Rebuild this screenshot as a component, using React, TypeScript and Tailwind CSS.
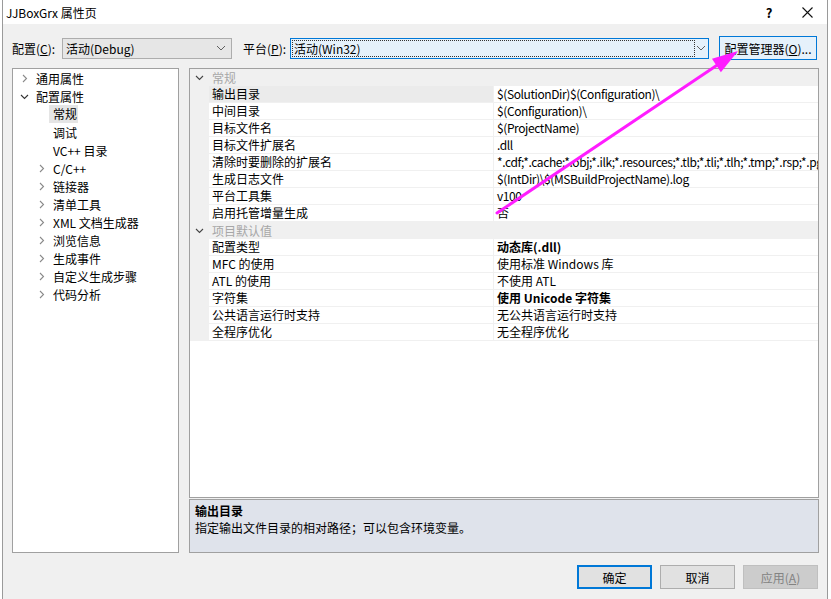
import React from "react";

const ChevR = ({ color = "#8a8a8a" }: { color?: string }) => (
  <svg width="9" height="9" viewBox="0 0 9 9" className="block">
    <path d="M3 1 L6.5 4.5 L3 8" fill="none" stroke={color} strokeWidth="1.1" />
  </svg>
);
const ChevD = ({ color = "#333333" }: { color?: string }) => (
  <svg width="9" height="9" viewBox="0 0 9 9" className="block">
    <path d="M1 3 L4.5 6.5 L8 3" fill="none" stroke={color} strokeWidth="1.1" />
  </svg>
);
const ComboChev = () => (
  <svg width="10" height="6" viewBox="0 0 10 6" className="block">
    <path d="M1 1 L5 5 L9 1" fill="none" stroke="#606060" strokeWidth="1" />
  </svg>
);

type TreeItem = { label: string; level: 1 | 2; chev?: "r" | "d"; selected?: boolean };
const tree: TreeItem[] = [
  { label: "通用属性", level: 1, chev: "r" },
  { label: "配置属性", level: 1, chev: "d" },
  { label: "常规", level: 2, selected: true },
  { label: "调试", level: 2 },
  { label: "VC++ 目录", level: 2 },
  { label: "C/C++", level: 2, chev: "r" },
  { label: "链接器", level: 2, chev: "r" },
  { label: "清单工具", level: 2, chev: "r" },
  { label: "XML 文档生成器", level: 2, chev: "r" },
  { label: "浏览信息", level: 2, chev: "r" },
  { label: "生成事件", level: 2, chev: "r" },
  { label: "自定义生成步骤", level: 2, chev: "r" },
  { label: "代码分析", level: 2, chev: "r" },
];

type Row =
  | { kind: "h"; label: string }
  | { kind: "r"; name: string; value: string; bold?: boolean; sel?: boolean };

const rows: Row[] = [
  { kind: "h", label: "常规" },
  { kind: "r", name: "输出目录", value: "$(SolutionDir)$(Configuration)\\", sel: true },
  { kind: "r", name: "中间目录", value: "$(Configuration)\\" },
  { kind: "r", name: "目标文件名", value: "$(ProjectName)" },
  { kind: "r", name: "目标文件扩展名", value: ".dll" },
  {
    kind: "r",
    name: "清除时要删除的扩展名",
    value: "*.cdf;*.cache;*.obj;*.ilk;*.resources;*.tlb;*.tli;*.tlh;*.tmp;*.rsp;*.pgc;*.pgd;*.meta;$(TargetPath)",
  },
  { kind: "r", name: "生成日志文件", value: "$(IntDir)\\$(MSBuildProjectName).log" },
  { kind: "r", name: "平台工具集", value: "v100" },
  { kind: "r", name: "启用托管增量生成", value: "否" },
  { kind: "h", label: "项目默认值" },
  { kind: "r", name: "配置类型", value: "动态库(.dll)", bold: true },
  { kind: "r", name: "MFC 的使用", value: "使用标准 Windows 库" },
  { kind: "r", name: "ATL 的使用", value: "不使用 ATL" },
  { kind: "r", name: "字符集", value: "使用 Unicode 字符集", bold: true },
  { kind: "r", name: "公共语言运行时支持", value: "无公共语言运行时支持" },
  { kind: "r", name: "全程序优化", value: "无全程序优化" },
];

const isAscii = (s: string) => /^[\x20-\x7e]+$/.test(s);

export default function App() {
  // arrow geometry
  const sx = 497, sy = 213, tx = 738, ty = 51;
  const dx = tx - sx, dy = ty - sy;
  const len = Math.hypot(dx, dy);
  const ux = dx / len, uy = dy / len;
  const hl = 26, hw = 8;
  const bx = tx - ux * hl, by = ty - uy * hl;
  const px = -uy, py = ux;
  const head = `${tx},${ty} ${bx + px * hw},${by + py * hw} ${bx - px * hw},${by - py * hw}`;

  return (
    <div className="relative w-[831px] h-[599px] overflow-hidden bg-white text-[12px] leading-[17px] text-black font-['Noto_Sans_CJK_SC','Noto_Sans',sans-serif]">
      <div className="ml-[2px] w-[826px] h-[599px] flex flex-col bg-[#f0f0f0] border-l border-r border-[#9a9a9a]">
        {/* title bar */}
        <div className="h-[24px] shrink-0 bg-white flex items-center pl-[3px]">
          <span className="flex-1">JJBoxGrx 属性页</span>
          <span className="w-[14px] text-center text-[13px] font-bold mr-[26px]">?</span>
          <svg width="11" height="11" viewBox="0 0 11 11" className="block mr-[14px]">
            <path d="M0.5 0.5 L10.5 10.5 M10.5 0.5 L0.5 10.5" stroke="#111" strokeWidth="1.1" />
          </svg>
        </div>

        <div className="flex-1 min-w-0 flex flex-col pl-[9px] pr-[8px]">
          {/* config row */}
          <div className="mt-[12px] h-[24px] flex items-center">
            <span className="w-[50px] shrink-0">
              配置(<span className="underline">C</span>):
            </span>
            <div className="w-[170px] shrink-0 h-[21px] bg-[#e6e6e6] border border-[#adadad] flex items-center pl-[3px] pr-[5px]">
              <span className="flex-1">活动(Debug)</span>
              <ComboChev />
            </div>
            <span className="ml-[11px] w-[47px] shrink-0">
              平台(<span className="underline">P</span>):
            </span>
            <div className="w-[419px] shrink-0 h-[21px] bg-[#e5f1fb] border border-[#0078d7] flex items-center p-[1px]">
              <div className="w-[403px] h-full border border-dotted border-[#333] flex items-center pl-[1px]">
                活动(Win32)
              </div>
              <div className="flex-1 flex justify-center">
                <ComboChev />
              </div>
            </div>
            <div className="ml-[10px] w-[98px] shrink-0 h-[24px] bg-[#e5f1fb] border border-[#0078d7] flex items-center justify-center">
              配置管理器(<span className="underline">O</span>)...
            </div>
          </div>

          {/* main */}
          <div className="mt-[8px] h-[485px] flex gap-[10px] min-w-0">
            <div className="w-[167px] shrink-0 h-full bg-white border border-[#a0a0a0]">
              {tree.map((t, i) => {
                const pl = t.level === 1 ? 7 : 24;
                return (
                  <div key={i} className="h-[18px] flex items-center whitespace-nowrap" style={{ paddingLeft: pl }}>
                    <div className="w-[9px] mr-[7px] flex justify-center">
                      {t.chev === "r" ? <ChevR /> : t.chev === "d" ? <ChevD /> : null}
                    </div>
                    {t.selected ? (
                      <span className="-ml-[4px] pl-[4px] pr-[1px] bg-[#e5e5e5] leading-[18px]">{t.label}</span>
                    ) : (
                      <span>{t.label}</span>
                    )}
                  </div>
                );
              })}
            </div>

            <div className="flex-1 min-w-0 flex flex-col gap-[1px]">
              <div className="h-[430px] bg-white border border-[#a0a0a0] overflow-hidden">
                {rows.map((r, i) =>
                  r.kind === "h" ? (
                    <div key={i} className="h-[17px] flex">
                      <div className="w-[19px] shrink-0 bg-[#f0f0f0] flex items-center justify-center">
                        <ChevD color="#444" />
                      </div>
                      <div className="flex-1 bg-[#f0f0f0] pl-[3px] text-[#a7a7a7]">{r.label}</div>
                    </div>
                  ) : (
                    <div key={i} className="h-[17px] flex min-w-0">
                      <div className="w-[19px] shrink-0 bg-[#f0f0f0]" />
                      <div
                        className={
                          "w-[285px] shrink-0 h-[17px] pl-[3px] border-r border-b border-[#f0f0f0] leading-[16px] " +
                          (r.sel ? "bg-[#ebebeb]" : "bg-white")
                        }
                      >
                        {r.name}
                      </div>
                      <div
                        className={
                          "flex-1 min-w-0 h-[17px] pl-[3px] border-b border-[#f0f0f0] leading-[16px] whitespace-nowrap overflow-hidden " +
                          (r.bold ? "font-bold " : "") +
                          (isAscii(r.value) ? "tracking-[-0.4px]" : "")
                        }
                      >
                        {r.value}
                      </div>
                    </div>
                  )
                )}
              </div>
              <div className="h-[54px] bg-[#dfe3eb] border border-[#a0a0a0] pl-[5px] pt-[2px]">
                <div className="font-bold">输出目录</div>
                <div>指定输出文件目录的相对路径；可以包含环境变量。</div>
              </div>
            </div>
          </div>

          {/* buttons */}
          <div className="mt-[12px] h-[24px] flex justify-end gap-[8px] mr-[1px]">
            <div className="w-[75px] h-[24px] bg-[#e1e1e1] border-2 border-[#0078d7] flex items-center justify-center">确定</div>
            <div className="w-[75px] h-[24px] bg-[#e1e1e1] border border-[#adadad] flex items-center justify-center">取消</div>
            <div className="w-[75px] h-[24px] bg-[#cccccc] border border-[#bfbfbf] flex items-center justify-center text-[#838383]">
              应用(<span className="underline">A</span>)
            </div>
          </div>
        </div>
      </div>

      {/* magenta annotation arrow */}
      <svg className="absolute left-0 top-0 pointer-events-none" width="831" height="599">
        <line x1={sx} y1={sy} x2={bx + ux * 2} y2={by + uy * 2} stroke="#ff1dff" strokeWidth="3" strokeLinecap="round" />
        <polygon points={head} fill="#ff1dff" />
      </svg>
    </div>
  );
}
